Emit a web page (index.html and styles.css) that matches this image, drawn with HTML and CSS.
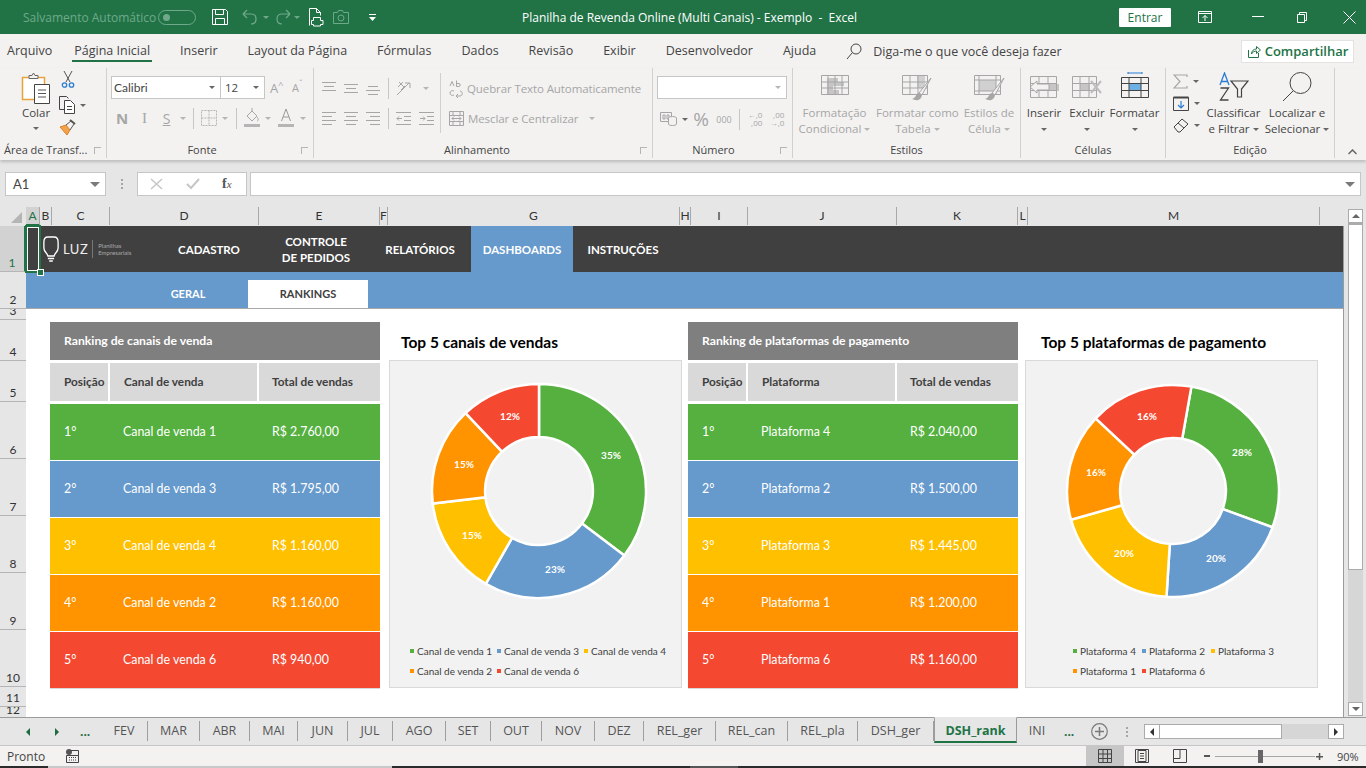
FILE: index.html
```html
<!DOCTYPE html>
<html lang="pt-BR">
<head>
<meta charset="utf-8">
<title>Planilha de Revenda Online (Multi Canais) - Exemplo - Excel</title>
<link rel="stylesheet" href="styles.css">
</head>
<body>

<!-- Title bar -->
<header class="titlebar">
    <div class="qat">
        <span class="autosave">Salvamento Automático</span>
        <span class="toggle"><i></i></span>
        <svg class="qat-save" width="18" height="18" viewBox="0 0 18 18" fill="none" stroke="#fff"><path d="M1.5 1.5h13l2 2v13h-15z"/><path d="M4.5 1.5v5h8v-5M4.5 16.5v-6h9v6"/></svg>
        <svg class="qat-undo" width="18" height="16" viewBox="0 0 18 16" fill="none" stroke="#6fa98a" stroke-width="1.2"><path d="M1 5l4-4M1 5l4 4M1 5h8c3 0 5 2 5 5s-2 5-5 5"/></svg>
        <i class="caret caret-qat"></i>
        <svg class="qat-redo" width="18" height="16" viewBox="0 0 18 16" fill="none" stroke="#6fa98a" stroke-width="1.2"><path d="M17 5l-4-4M17 5l-4 4M17 5H9c-3 0-5 2-5 5s2 5 5 5"/></svg>
        <i class="caret caret-qat"></i>
        <svg class="qat-print" width="16" height="20" viewBox="0 0 16 20" fill="none" stroke="#fff"><path d="M1.5 18.5V1.5h7l4 4v3M8.500 1.500v4h4"/><path d="M5.500 10.500h7v3h2.500v4h-2.500v1.500h-7v-1.500H3.500v-4h2z" fill="#217346"/></svg>
        <svg class="qat-camera" width="16" height="14" viewBox="0 0 16 14" fill="none" stroke="#6fa98a"><path d="M.5 2.500h4l1-2h4l1 2h5v11H.5z"/><circle cx="8" cy="8" r="3"/></svg>
        <svg class="qat-more" width="7" height="9" viewBox="0 0 7 9" fill="#fff"><path d="M0 1h7v1H0zM0 4h7L3.500 8z"/></svg>
    </div>
    <div class="doc-title">Planilha de Revenda Online (Multi Canais) - Exemplo &nbsp;-&nbsp; Excel</div>
    <div class="win-controls">
        <button class="signin">Entrar</button>
        <svg class="ctl-display" width="14" height="12" viewBox="0 0 14 12" fill="none" stroke="#fff"><path d="M.5.5h13v11H.5zM.5 2.500h13M7 10V4.500M4.500 7L7 4.500 9.500 7"/></svg>
        <svg class="ctl-min" width="12" height="2" viewBox="0 0 12 2" fill="#fff"><path d="M0 0h12v1H0z"/></svg>
        <svg class="ctl-max" width="10" height="11" viewBox="0 0 10 11" fill="none" stroke="#fff"><path d="M.5 2.500h7v8h-7zM2.500 2.500v-2h7v8h-2"/></svg>
        <svg class="ctl-close" width="13" height="13" viewBox="0 0 13 13" stroke="#fff"><path d="M.5.5l12 12M12.500.5l-12 12"/></svg>
    </div>
</header>

<!-- Tabs -->
<nav class="tabs">
    <span class="tab tab-file">Arquivo</span>
    <span class="tab tab-active">Página Inicial</span>
    <span class="tab">Inserir</span>
    <span class="tab">Layout da Página</span>
    <span class="tab">Fórmulas</span>
    <span class="tab">Dados</span>
    <span class="tab">Revisão</span>
    <span class="tab">Exibir</span>
    <span class="tab">Desenvolvedor</span>
    <span class="tab">Ajuda</span>
    <svg class="tell-icon" width="16" height="17" viewBox="0 0 16 17" fill="none" stroke="#444"><circle cx="10" cy="6" r="5"/><path d="M6.500 9.500L1 16"/></svg>
    <span class="tell">Diga-me o que você deseja fazer</span>
    <button class="share">
        <svg width="14" height="14" viewBox="0 0 14 14" fill="none" stroke="#217346"><path d="M1.500 6v7.500h10V9"/><path d="M4.500 10c0-3 2-5 5-5V2.500l4 3.500-4 3.500V7c-2 0-4 1-5 3z"/></svg>
        Compartilhar
    </button>
</nav>

<!-- Ribbon -->
<section class="ribbon">

    <div class="group g-clip">
        <div class="group-body clip-body">
            <div class="paste">
                <svg width="30" height="32" viewBox="0 0 30 32" fill="none">
                    <path d="M1.500 5.500h22v22h-22z" stroke="#e8a33d" stroke-width="1.500" fill="#fff"/>
                    <path d="M8 5.500V3.500h3L12.500 1 14 3.500h3v3H8z" stroke="#666" fill="#f3f2f1"/>
                    <path d="M13.500 12.500h15v19h-15z" stroke="#444" fill="#fff"/>
                    <path d="M17 18h8M17 21.500h8M17 25h8" stroke="#555"/>
                </svg>
                <span>Colar</span>
                <i class="caret"></i>
            </div>
            <div class="clip-tools">
                <svg width="14" height="17" viewBox="0 0 14 17" fill="none"><path d="M3 0l6 11M11 0L5 11" stroke="#555"/><circle cx="3.500" cy="14" r="2.200" stroke="#2b7cd3" stroke-width="1.300"/><circle cx="10.500" cy="14" r="2.200" stroke="#2b7cd3" stroke-width="1.300"/></svg>
                <div class="clip-copy">
                    <svg width="16" height="18" viewBox="0 0 16 18" fill="none" stroke="#444"><path d="M5.500 13.500h-5V.5h7l2 2"/><path d="M5.500 4.500h6l4 4v9h-10z" fill="#fff"/><path d="M8 10.500h5M8 13.500h5"/></svg>
                    <i class="caret"></i>
                </div>
                <svg width="18" height="17" viewBox="0 0 18 17" fill="none"><path d="M1 8l6-2 4 5-3 5z" fill="#f2a24a" stroke="#d9822b"/><path d="M7 6l5-4M11 11l4-6" stroke="#555"/><path d="M11 1l5 4" stroke="#555" stroke-width="2"/></svg>
            </div>
        </div>
        <div class="group-label label-clip">Área de Transf...<i class="launcher"></i></div>
    </div>

    <div class="group g-font">
        <div class="group-body font-body">
            <div class="font-row1">
                <div class="combo combo-font">Calibri<i class="caret"></i></div>
                <div class="combo combo-size">12<i class="caret"></i></div>
                <span class="grow-a">A<sup>^</sup></span>
                <span class="grow-a small-a">A<sup>ˇ</sup></span>
            </div>
            <div class="font-row2">
                <b class="fmt fmt-b">N</b>
                <i class="fmt fmt-i">I</i>
                <u class="fmt">S</u>
                <i class="caret caret-off"></i>
                <i class="tool-sep"></i>
                <svg width="16" height="16" viewBox="0 0 16 16" fill="none" stroke="#b5b5b5" stroke-dasharray="2 1"><path d="M.5.5h15v15H.5zM8 .5v15M.5 8h15"/></svg>
                <i class="caret caret-off"></i>
                <i class="tool-sep"></i>
                <svg width="16" height="20" viewBox="0 0 16 20" fill="none"><path d="M3 8l5-5 5 5-5 5z" stroke="#a6a6a6"/><path d="M8 3V0M13 9c2 2 1 4 0 4" stroke="#a6a6a6"/><path d="M0 16h16v3H0z" fill="#b5b5b5"/></svg>
                <i class="caret caret-off"></i>
                <svg width="16" height="20" viewBox="0 0 16 20" fill="none"><path d="M3.500 13L8 1l4.500 12M5 9h6" stroke="#999"/><path d="M0 16h16v3H0z" fill="#b5b5b5"/></svg>
                <i class="caret caret-off"></i>
            </div>
        </div>
        <div class="group-label label-font">Fonte<i class="launcher"></i></div>
    </div>

    <div class="group g-align">
        <div class="group-body align-body">
            <div class="align-left">
                <svg width="14" height="16" viewBox="0 0 14 16" stroke="#a6a6a6"><path d="M0 2.500h14M2 6.500h10M0 10.500h14"/></svg>
                <svg width="14" height="16" viewBox="0 0 14 16" stroke="#a6a6a6"><path d="M0 4.500h14M2 8.500h10M0 12.500h14"/></svg>
                <svg width="14" height="16" viewBox="0 0 14 16" stroke="#a6a6a6"><path d="M2 6.500h10M0 10.500h14M2 14.500h10"/></svg>
                <i class="tool-sep"></i>
                <svg width="16" height="16" viewBox="0 0 16 16" fill="none" stroke="#a6a6a6"><path d="M1 15L13 3M9 3h5v5"/><path d="M2 7l5-5M3 2l5 5M5 10l4-4"/></svg>
                <i class="caret caret-off"></i>

                <svg width="14" height="14" viewBox="0 0 14 14" stroke="#a6a6a6"><path d="M0 1.500h14M0 5.500h10M0 9.500h14M0 13.500h10"/></svg>
                <svg width="14" height="14" viewBox="0 0 14 14" stroke="#a6a6a6"><path d="M0 1.500h14M2 5.500h10M0 9.500h14M2 13.500h10"/></svg>
                <svg width="14" height="14" viewBox="0 0 14 14" stroke="#a6a6a6"><path d="M0 1.500h14M4 5.500h10M0 9.500h14M4 13.500h10"/></svg>
                <i class="tool-sep"></i>
                <svg width="15" height="14" viewBox="0 0 15 14" fill="none" stroke="#a6a6a6"><path d="M0 1.500h15M8 5.500h7M8 9.500h7M0 13.500h15M6 7.500H1M3 5.500l-2 2 2 2"/></svg>
                <svg width="15" height="14" viewBox="0 0 15 14" fill="none" stroke="#a6a6a6"><path d="M0 1.500h15M8 5.500h7M8 9.500h7M0 13.500h15M1 7.500h5M4 5.500l2 2-2 2"/></svg>
                <i class="blank"></i>
            </div>
            <div class="align-right">
                <div class="wrap-row">
                    <svg class="wrap-icon" width="14" height="18" viewBox="0 0 14 18" fill="none" stroke="#a6a6a6"><path d="M1 6l2-4.500L5 6M7.500.5v6h2.500c1.500 0 1.500-3 0-3H7.500"/><path d="M5 11c-2-1-4 0-4 2s2 3 4 2M7 16h4c3 0 3-5 0-5M9 14l-2 2 2 2"/></svg>
                    Quebrar Texto Automaticamente
                </div>
                <div class="wrap-row">
                    <svg class="merge-icon" width="15" height="15" viewBox="0 0 15 15" fill="none" stroke="#a6a6a6"><path d="M.5.5h14v14H.5zM.5 4.500h14M.5 10.500h14M4 .5v4M11 .5v4M4 10.500v4M11 10.500v4M3 7.500h9M5 5.500l-2 2 2 2M10 5.500l2 2-2 2"/></svg>
                    Mesclar e Centralizar
                    <i class="caret caret-off caret-merge"></i>
                </div>
            </div>
        </div>
        <div class="group-label label-align">Alinhamento<i class="launcher"></i></div>
    </div>

    <div class="group g-number">
        <div class="group-body number-body">
            <div class="combo combo-number"><i class="caret caret-off"></i></div>
            <div class="number-row">
                <svg width="17" height="14" viewBox="0 0 17 14" fill="none" stroke="#a6a6a6"><path d="M.5.5h11v9H.5z"/><path d="M3 3h2v4H3zM7 3h2v4H7z"/><ellipse cx="12.500" cy="6" rx="4" ry="1.500" fill="#f3f2f1"/><path d="M8.500 6v6c0 2 8 2 8 0V6" fill="#f3f2f1"/></svg>
                <i class="caret"></i>
                <span class="pct">%</span>
                <span class="thou">000</span>
                <i class="tool-sep"></i>
                <span class="dec"><span>←,0</span><span>,00</span></span>
                <span class="dec"><span>,00</span><span>→,0</span></span>
            </div>
        </div>
        <div class="group-label label-number">Número<i class="launcher"></i></div>
    </div>

    <div class="group g-styles">
        <div class="group-body big-body styles-body">
            <div class="big off">
                <svg width="28" height="20" viewBox="0 0 28 20" fill="none"><path d="M6 3h11v4h6v4H12v4h6v4H6z" fill="#c6c6c6"/><path d="M.5.500h27v19H.5zM.5 7h27M.5 13h27M7 .5v19M14 .5v19M21 .5v19" stroke="#a6a6a6"/></svg>
                <span>Formatação</span>
                <span>Condicional<i class="caret caret-off"></i></span>
            </div>
            <div class="big off">
                <svg width="30" height="28" viewBox="0 0 30 28" fill="none"><path d="M15 1h8v12h-8z" fill="#d0d0d0"/><path d="M.5.500h25v19H.5zM.5 7h25M.5 13h25M8 .5v19M16 .5v19" stroke="#a6a6a6"/><path d="M29 3L17 18l3 2 9-17z" fill="#f3f2f1" stroke="#a6a6a6"/><path d="M17 18c-3 0-3 5-7 6 4 2 9 2 10-4z" fill="#a6a6a6"/></svg>
                <span>Formatar como</span>
                <span>Tabela<i class="caret caret-off"></i></span>
            </div>
            <div class="big off">
                <svg width="31" height="28" viewBox="0 0 31 28" fill="none"><path d="M5 5h17v11H5z" fill="#d0d0d0"/><path d="M.5.500h26v19H.5zM5 .5v19M22 .5v19M.5 5h26M.5 16h26" stroke="#a6a6a6"/><path d="M30 3L18 18l3 2 9-17z" fill="#f3f2f1" stroke="#a6a6a6"/><path d="M18 18c-3 0-3 5-7 6 4 2 9 2 10-4z" fill="#a6a6a6"/></svg>
                <span>Estilos de</span>
                <span>Célula<i class="caret caret-off"></i></span>
            </div>
        </div>
        <div class="group-label">Estilos</div>
    </div>

    <div class="group g-cells">
        <div class="group-body big-body cells-body">
            <div class="big">
                <svg width="30" height="24" viewBox="0 0 30 24" fill="none"><path d="M12 9h18v7H12z" fill="#c6c6c6"/><path d="M1.500 1.500h26v21h-26zM1.500 8.500h26M1.500 15.500h26M10 1.500v21M19 1.500v21" stroke="#a6a6a6"/><path d="M1 12l7-6v3h12v6H8v3z" fill="#f3f2f1" stroke="#a6a6a6"/></svg>
                <span>Inserir</span>
                <i class="caret"></i>
            </div>
            <div class="big">
                <svg width="30" height="24" viewBox="0 0 30 24" fill="none"><path d="M8 9h10v7H8z" fill="#c6c6c6"/><path d="M.5 1.500h24v21H.5zM.5 8.500h24M.5 15.500h24M8 1.500v21M17 1.500v21" stroke="#a6a6a6"/><path d="M19 6l10 12M29 6L19 18" stroke="#bdbdbd" stroke-width="2"/></svg>
                <span>Excluir</span>
                <i class="caret"></i>
            </div>
            <div class="big big-format">
                <svg width="28" height="26" viewBox="0 0 28 26" fill="none"><path d="M7 1h14M7 0v2M21 0v2" stroke="#2b7cd3"/><path d="M8 11h12v7H8z" fill="#6cb0e6"/><path d="M.5 5.500h27v20H.5zM.5 11.500h27M.5 18.500h27M8 5.500v20M20 5.500v20" stroke="#444"/></svg>
                <span>Formatar</span>
                <i class="caret"></i>
            </div>
        </div>
        <div class="group-label">Células</div>
    </div>

    <div class="group g-edit">
        <div class="group-body big-body edit-body">
            <div class="edit-small">
                <div class="edit-tool">
                    <svg width="15" height="15" viewBox="0 0 15 15" fill="none" stroke="#a6a6a6" stroke-width="1.200"><path d="M14 3V1H1l6 6.500L1 14h13v-2"/></svg>
                    <i class="caret"></i>
                </div>
                <div class="edit-tool">
                    <svg width="16" height="15" viewBox="0 0 16 15" fill="none"><path d="M.5 1.500h15v13H.5z" stroke="#444"/><path d="M.5 1.500h15" stroke="#444" stroke-width="2"/><path d="M8 5v7M5 9l3 3 3-3" stroke="#2b7cd3" stroke-width="1.200"/></svg>
                    <i class="caret"></i>
                </div>
                <div class="edit-tool">
                    <svg width="16" height="15" viewBox="0 0 16 15" fill="none" stroke="#444"><path d="M1 9l8-8 6 5-8 8H5z"/><path d="M5 5l6 5"/></svg>
                    <i class="caret"></i>
                </div>
            </div>
            <div class="big big-tall">
                <svg width="31" height="29" viewBox="0 0 31 29" fill="none"><path d="M2 13L6.500 1 11 13M3.500 9.500h6" stroke="#2b7cd3" stroke-width="1.300"/><path d="M2.500 16h8l-8 12h8" stroke="#444" stroke-width="1.300"/><path d="M13 9h17l-6.500 8v8h-4v-8z" stroke="#444" stroke-width="1.200"/></svg>
                <span>Classificar</span>
                <span>e Filtrar<i class="caret"></i></span>
            </div>
            <div class="big big-tall">
                <svg width="30" height="29" viewBox="0 0 30 29" fill="none" stroke="#444"><circle cx="18.500" cy="11" r="10.500"/><path d="M11 19L1 29"/></svg>
                <span>Localizar e</span>
                <span>Selecionar<i class="caret"></i></span>
            </div>
        </div>
        <div class="group-label">Edição</div>
    </div>

    <svg class="collapse" width="9" height="6" viewBox="0 0 9 6" fill="none" stroke="#666" stroke-width="1.500"><path d="M.5 5l4-4 4 4"/></svg>
</section>

<!-- Formula bar -->
<div class="formula">
    <div class="namebox">A1<i class="caret caret-dark"></i></div>
    <div class="grip"></div>
    <div class="fx-box">
        <svg width="13" height="12" viewBox="0 0 13 12" stroke="#c6c6c6" stroke-width="1.500"><path d="M1 1l11 10M12 1L1 11"/></svg>
        <svg width="14" height="12" viewBox="0 0 14 12" fill="none" stroke="#c6c6c6" stroke-width="2"><path d="M1 6l4 4 8-9"/></svg>
        <span class="fx"><i>f</i><small>x</small></span>
    </div>
    <div class="fx-input"><i class="caret caret-dark"></i></div>
</div>

<!-- Sheet -->
<main class="workbook">
    <div class="grid-side">
        <div class="col-heads">
            <div class="corner"><i></i></div>
            <span class="col-on">A</span><span>B</span><span>C</span><span>D</span><span>E</span><span>F</span><span>G</span><span>H</span><span>I</span><span>J</span><span>K</span><span>L</span><span>M</span><span></span>
        </div>
        <div class="grid-main">
            <div class="row-heads">
                <span class="row-on r1">1</span>
                <span class="r2">2</span>
                <span class="r3">3</span>
                <span class="r4">4</span>
                <span class="r5">5</span>
                <span class="r6">6</span>
                <span class="r6">7</span>
                <span class="r6">8</span>
                <span class="r6">9</span>
                <span class="r6">10</span>
                <span class="r11">11</span>
                <span class="r12">12</span>
            </div>
            <div class="sheet">
                <div class="topnav">
                    <div class="logo">
                        <svg width="16" height="26" viewBox="0 0 18 26" fill="none" stroke="#fff" stroke-width="1.500" preserveAspectRatio="none"><path d="M5.500 1h7c3 0 4.500 2 4.500 5v6c0 4-4 5-4.500 8h-7C5 17 1 16 1 12V6c0-3 1.500-5 4.500-5z"/><path d="M5.500 22.500h7M7 25h4"/></svg>
                        <span class="logo-name">LUZ</span>
                        <span class="logo-sub">Planilhas<br>Empresariais</span>
                    </div>
                    <a class="nav-item">CADASTRO</a>
                    <a class="nav-item">CONTROLE<br>DE PEDIDOS</a>
                    <a class="nav-item nav-rel">RELATÓRIOS</a>
                    <a class="nav-on">DASHBOARDS</a>
                    <a class="nav-item">INSTRUÇÕES</a>
                </div>
                <div class="subnav">
                    <a class="sub-item">GERAL</a>
                    <a class="sub-item sub-on">RANKINGS</a>
                </div>
                <div class="board">

                    <div class="rank">
                        <div class="rank-title">Ranking de canais de venda</div>
                        <div class="rank-row rank-head"><span>Posição</span><span>Canal de venda</span><span>Total de vendas</span></div>
                        <div class="rank-row bg-green"><span>1°</span><span>Canal de venda 1</span><span>R$ 2.760,00</span></div>
                        <div class="rank-row bg-blue"><span>2°</span><span>Canal de venda 3</span><span>R$ 1.795,00</span></div>
                        <div class="rank-row bg-yellow"><span>3°</span><span>Canal de venda 4</span><span>R$ 1.160,00</span></div>
                        <div class="rank-row bg-orange"><span>4°</span><span>Canal de venda 2</span><span>R$ 1.160,00</span></div>
                        <div class="rank-row bg-red"><span>5°</span><span>Canal de venda 6</span><span>R$ 940,00</span></div>
                    </div>

                    <div class="chart chart-a">
                        <h2>Top 5 canais de vendas</h2>
                        <div class="panel">
                            <svg class="donut" width="291" height="280" viewBox="-149 -130 291 280">
                                <path class="s-green" d="M0-107A107 107 0 0 1 85.300 64.600L43 32.600A54 54 0 0 0 0-54Z"/>
                                <path class="s-blue" d="M85.300 64.600A107 107 0 0 1-53.200 92.800L-26.900 46.800A54 54 0 0 0 43 32.600Z"/>
                                <path class="s-yellow" d="M-53.200 92.800A107 107 0 0 1-106.300 12.500L-53.600 6.300A54 54 0 0 0-26.900 46.800Z"/>
                                <path class="s-orange" d="M-106.300 12.500A107 107 0 0 1-73.400-77.900L-37-39.300A54 54 0 0 0-53.600 6.300Z"/>
                                <path class="s-red" d="M-73.400-77.900A107 107 0 0 1 0-107L0-54A54 54 0 0 0-37-39.300Z"/>
                                <text x="72" y="-32">35%</text>
                                <text x="16" y="82">23%</text>
                                <text x="-67" y="48">15%</text>
                                <text x="-75" y="-23">15%</text>
                                <text x="-29" y="-71">12%</text>
                            </svg>
                            <ul class="legend legend-a">
                                <li><i class="bg-green"></i>Canal de venda 1</li>
                                <li><i class="bg-blue"></i>Canal de venda 3</li>
                                <li><i class="bg-yellow"></i>Canal de venda 4</li>
                                <li><i class="bg-orange"></i>Canal de venda 2</li>
                                <li><i class="bg-red"></i>Canal de venda 6</li>
                            </ul>
                        </div>
                    </div>

                    <div class="rank">
                        <div class="rank-title">Ranking de plataformas de pagamento</div>
                        <div class="rank-row rank-head"><span>Posição</span><span>Plataforma</span><span>Total de vendas</span></div>
                        <div class="rank-row bg-green"><span>1°</span><span>Plataforma 4</span><span>R$ 2.040,00</span></div>
                        <div class="rank-row bg-blue"><span>2°</span><span>Plataforma 2</span><span>R$ 1.500,00</span></div>
                        <div class="rank-row bg-yellow"><span>3°</span><span>Plataforma 3</span><span>R$ 1.445,00</span></div>
                        <div class="rank-row bg-orange"><span>4°</span><span>Plataforma 1</span><span>R$ 1.200,00</span></div>
                        <div class="rank-row bg-red"><span>5°</span><span>Plataforma 6</span><span>R$ 1.160,00</span></div>
                    </div>

                    <div class="chart chart-b">
                        <h2>Top 5 plataformas de pagamento</h2>
                        <div class="panel">
                            <svg class="donut" width="291" height="280" viewBox="-147 -130 291 280">
                                <path class="s-green" d="M18.400-104.400A106 106 0 0 1 99.600 36.300L49.800 18.100A53 53 0 0 0 9.200-52.200Z"/>
                                <path class="s-blue" d="M99.600 36.300A106 106 0 0 1-6.500 105.800L-3.200 52.900A53 53 0 0 0 49.800 18.100Z"/>
                                <path class="s-yellow" d="M-6.500 105.800A106 106 0 0 1-102 28.700L-51 14.300A53 53 0 0 0-3.200 52.900Z"/>
                                <path class="s-orange" d="M-102 28.700A106 106 0 0 1-77.300-72.600L-38.600-36.300A53 53 0 0 0-51 14.300Z"/>
                                <path class="s-red" d="M-77.300-72.600A106 106 0 0 1 18.400-104.400L9.200-52.200A53 53 0 0 0-38.600-36.300Z"/>
                                <text x="69" y="-35">28%</text>
                                <text x="43" y="71">20%</text>
                                <text x="-49" y="66">20%</text>
                                <text x="-77" y="-15">16%</text>
                                <text x="-26" y="-71">16%</text>
                            </svg>
                            <ul class="legend legend-b">
                                <li><i class="bg-green"></i>Plataforma 4</li>
                                <li><i class="bg-blue"></i>Plataforma 2</li>
                                <li><i class="bg-yellow"></i>Plataforma 3</li>
                                <li><i class="bg-orange"></i>Plataforma 1</li>
                                <li><i class="bg-red"></i>Plataforma 6</li>
                            </ul>
                        </div>
                    </div>

                </div>
            </div>
            <div class="cell-cursor"><i></i></div>
        </div>
    </div>
    <div class="vscroll">
        <button class="vs-btn"><i class="tri-up"></i></button>
        <div class="vs-thumb"></div>
        <div class="vs-track"></div>
        <button class="vs-btn"><i class="tri-down"></i></button>
    </div>
</main>

<!-- Sheet tabs -->
<div class="sheetbar">
    <div class="sheet-nav">
        <i class="nav-left"></i>
        <i class="nav-right"></i>
        <b>...</b>
    </div>
    <div class="sheet-tabs">
        <span>FEV</span><span>MAR</span><span>ABR</span><span>MAI</span><span>JUN</span><span>JUL</span><span>AGO</span><span>SET</span><span>OUT</span><span>NOV</span><span>DEZ</span><span>REL_ger</span><span>REL_can</span><span>REL_pla</span><span>DSH_ger</span><span class="sheet-on">DSH_rank</span><span class="sheet-last">INI</span>
    </div>
    <b class="more-tabs">...</b>
    <svg class="add-sheet" width="17" height="17" viewBox="0 0 17 17" fill="none" stroke="#7a7a7a"><circle cx="8.500" cy="8.500" r="7.800" stroke-width="1.200"/><path d="M4 8.500h9M8.500 4v9" stroke-width="1.500"/></svg>
    <div class="bar-grip"></div>
    <div class="hscroll">
        <button class="hs-btn"><i class="tri-left"></i></button>
        <div class="hs-thumb"></div>
        <div class="hs-track"></div>
        <button class="hs-btn"><i class="tri-right"></i></button>
    </div>
</div>

<!-- Status bar -->
<footer class="status">
    <span class="ready">Pronto</span>
    <svg class="macro" width="13" height="14" viewBox="0 0 13 14" fill="none"><circle cx="3" cy="3" r="3" fill="#555"/><path d="M.5 6.500h12v7H.5zM5 1.500h7.500v5" stroke="#444"/><path d="M3 8.500h7M3 11h7" stroke="#444" stroke-dasharray="1 1"/></svg>
    <div class="status-right">
        <div class="view view-on">
            <svg width="14" height="14" viewBox="0 0 14 14" fill="none" stroke="#444"><path d="M.5.500h13v13H.5zM5 .5v13M9.500 .5v13M.5 5h13M.5 9.500h13"/></svg>
        </div>
        <div class="view view-page">
            <svg width="14" height="14" viewBox="0 0 14 14" fill="none" stroke="#444"><path d="M.5.500h13v13H.5z"/><path d="M3 1.500v11h8v-11zM5 4.500h4M5 7h4M5 9.500h4"/></svg>
        </div>
        <div class="view view-break">
            <svg width="14" height="14" viewBox="0 0 14 14" fill="none" stroke="#444"><path d="M.5.500h13v13H.5zM.5 9.500h6.500v-9"/></svg>
        </div>
        <i class="zoom-minus"></i>
        <div class="zoom-track"><i></i></div>
        <svg class="zoom-plus" width="7" height="7" viewBox="0 0 7 7" fill="#555"><path d="M0 3h7v1.500H0zM2.800 0h1.500v7H2.800z"/></svg>
        <span class="zoom-val">90%</span>
    </div>
</footer>
<div class="taskbar"><i class="task-a"></i><i class="task-b"></i></div>

</body>
</html>
```

FILE: styles.css
```css
* {
    box-sizing: border-box;
}
html, body {
    margin: 0;
    height: 100%;
}
body {
    width: 1366px;
    height: 768px;
    overflow: hidden;
    display: flex;
    flex-direction: column;
    background: #e6e6e6;
    color: #444;
    font-family: "Open Sans", "Liberation Sans", sans-serif;
    font-size: 12px;
}
button {
    font-family: inherit;
    border: 0;
    padding: 0;
}
i {
    font-style: normal;
}

/* carets */
.caret {
    display: inline-block;
    width: 0;
    height: 0;
    border-left: 3px solid transparent;
    border-right: 3px solid transparent;
    border-top: 3px solid #666;
}
.caret-off {
    border-top-color: #b5b5b5;
}
.caret-dark {
    border-left-width: 5px;
    border-right-width: 5px;
    border-top-width: 5px;
    border-top-color: #7a7a7a;
}
.caret-qat {
    border-top-color: #6fa98a;
}

/* title bar */
.titlebar {
    height: 34px;
    flex: none;
    background: #217346;
    display: grid;
    grid-template-columns: 522px 320px 1fr;
    align-items: center;
    color: #fff;
}
.qat {
    display: flex;
    align-items: center;
    padding-left: 23px;
}
.autosave {
    color: #6fa98a;
    width: 135px;
    font-size: 12px;
    white-space: nowrap;
}
.toggle {
    width: 38px;
    height: 15px;
    border: 1px solid #6fa98a;
    border-radius: 8px;
    display: flex;
    align-items: center;
    padding-left: 4px;
}
.toggle i {
    width: 7px;
    height: 7px;
    border-radius: 50%;
    background: #6fa98a;
}
.qat-save { margin-left: 15px; }
.qat-undo { margin-left: 13px; }
.caret-qat { margin-left: 3px; }
.qat-redo { margin-left: 4px; }
.qat-print { margin-left: 8px; }
.qat-camera { margin-left: 9px; }
.qat-more { margin-left: 20px; }
.doc-title {
    font-size: 12px;
    white-space: nowrap;
    text-align: center;
}
.win-controls {
    display: flex;
    align-items: center;
    padding-left: 277px;
}
.signin {
    width: 52px;
    height: 19px;
    background: #fff;
    color: #217346;
    font-size: 12px;
    border-radius: 1px;
}
.ctl-display { margin-left: 27px; }
.ctl-min { margin-left: 40px; }
.ctl-max { margin-left: 33px; }
.ctl-close { margin-left: 36px; }

/* tabs */
.tabs {
    height: 34px;
    flex: none;
    background: #f3f2f1;
    display: flex;
    align-items: center;
    padding-left: 7px;
    gap: 30px;
    font-size: 12.500px;
}
.tab {
    position: relative;
    white-space: nowrap;
    line-height: 34px;
}
.tab-file {
    margin-right: -8px;
}
.tab-active::after {
    content: "";
    position: absolute;
    left: -2px;
    right: -2px;
    bottom: 6px;
    height: 2px;
    background: #217346;
}
.tell-icon {
    margin-right: -19px;
}
.tell {
    white-space: nowrap;
}
.share {
    margin-left: auto;
    margin-right: 12px;
    width: 113px;
    height: 23px;
    background: #fff;
    color: #217346;
    font-size: 13px;
    font-weight: 600;
    border: 1px solid #e3e2e1;
    display: flex;
    align-items: center;
    justify-content: center;
    gap: 4px;
    white-space: nowrap;
}

/* ribbon */
.ribbon {
    height: 92px;
    flex: none;
    background: #f3f2f1;
    display: flex;
    align-items: flex-start;
    box-shadow: 0 2px 3px rgba(0,0,0,.18);
    position: relative;
    z-index: 2;
    font-size: 11.500px;
}
.group {
    height: 90px;
    display: flex;
    flex-direction: column;
    border-right: 1px solid #d2d0ce;
    flex: none;
}
.group-body {
    height: 76px;
}
.group-label {
    height: 16px;
    line-height: 16px;
    text-align: center;
    position: relative;
    white-space: nowrap;
    font-size: 11px;
}
.launcher {
    position: absolute;
    right: 5px;
    top: 5px;
    width: 7px;
    height: 7px;
    border-left: 1px solid #b5b5b5;
    border-top: 1px solid #b5b5b5;
}
.g-clip { width: 107px; }
.g-font { width: 207px; }
.g-align { width: 339px; }
.g-number { width: 140px; }
.g-styles { width: 228px; }
.g-cells { width: 145px; }
.g-edit { width: 169px; }
.label-clip {
    text-align: left;
    padding-left: 4px;
}
.label-font { padding-right: 16px; }
.label-align { padding-right: 12px; }
.label-number { padding-right: 18px; }

/* clipboard */
.clip-body {
    display: flex;
    padding-left: 21px;
}
.paste {
    width: 30px;
    display: flex;
    flex-direction: column;
    align-items: center;
    padding-top: 4px;
    line-height: 16px;
}
.paste span {
    margin-top: 1px;
}
.paste .caret {
    margin-top: 6px;
}
.clip-tools {
    display: flex;
    flex-direction: column;
    padding: 3px 0 0 8px;
    gap: 5px;
    align-items: flex-start;
}
.clip-tools > svg:first-child {
    margin-left: 2px;
}
.clip-copy {
    display: flex;
    align-items: center;
    gap: 5px;
    margin-top: 3px;
}

/* font */
.font-body {
    padding: 8px 0 0 4px;
}
.font-row1 {
    display: flex;
    align-items: center;
}
.combo {
    height: 23px;
    background: #fff;
    border: 1px solid #c6c6c6;
    line-height: 21px;
    padding-left: 2px;
    display: flex;
    align-items: center;
    justify-content: space-between;
    padding-right: 5px;
}
.combo-font {
    width: 110px;
    font-family: "Lato", sans-serif;
    font-size: 12px;
}
.combo-size {
    width: 44px;
    margin-left: 0;
    border-left: 0;
    padding-left: 4px;
}
.grow-a {
    color: #a6a6a6;
    font-size: 13px;
    width: 22px;
    margin-left: 5px;
}
.small-a {
    font-size: 11px;
    width: 18px;
    margin-left: 0;
}
.grow-a sup {
    font-size: 9px;
    line-height: 0;
}
.font-row2 {
    display: grid;
    grid-template-columns: 22px 23px 21px 11px 10px 21px 12px 10px 22px 10px 25px 9px;
    align-items: center;
    justify-items: center;
    margin-top: 7px;
    height: 24px;
}
.fmt {
    color: #a6a6a6;
    font-size: 14px;
}
.fmt-b {
    font-size: 15px;
}
.fmt-i {
    font-family: "Liberation Serif", serif;
    font-size: 15px;
}
.tool-sep {
    width: 1px;
    height: 21px;
    background: #c8c6c4;
    display: block;
}

/* alignment */
.align-body {
    display: flex;
    padding-top: 5px;
}
.align-left {
    width: 127px;
    height: 60px;
    padding-left: 4px;
    display: grid;
    grid-template-columns: 22px 22px 22px 8px 23px 22px;
    grid-template-rows: 1fr 1fr;
    align-items: center;
    justify-items: center;
    border-right: 1px solid #d2d0ce;
}
.align-right {
    padding-left: 8px;
    display: flex;
    flex-direction: column;
    justify-content: space-around;
    height: 60px;
    color: #a6a6a6;
    white-space: nowrap;
}
.wrap-row {
    display: flex;
    align-items: center;
    gap: 4px;
    letter-spacing: -.1px;
}
.wrap-icon {
    margin-right: 0;
}
.caret-merge {
    margin-left: 7px;
}

/* number */
.number-body {
    padding: 8px 0 0 4px;
}
.combo-number {
    width: 130px;
    justify-content: flex-end;
}
.number-row {
    display: grid;
    grid-template-columns: 23px 9px 24px 22px 8px 24px 20px;
    align-items: center;
    justify-items: center;
    margin-top: 7px;
    height: 24px;
    color: #a6a6a6;
}
.pct {
    font-size: 19px;
}
.thou {
    font-size: 9px;
}
.dec {
    display: flex;
    flex-direction: column;
    font-size: 8px;
    line-height: 8px;
    text-align: right;
}

/* big buttons */
.big-body {
    display: grid;
    padding-top: 5px;
}
.styles-body {
    grid-template-columns: 83px 82px 62px;
}
.cells-body {
    grid-template-columns: 46px 40px 55px;
}
.edit-body {
    grid-template-columns: 39px 57px 70px;
}
.big {
    display: grid;
    grid-template-rows: 32px 16px 16px;
    justify-items: center;
    align-items: center;
    white-space: nowrap;
    line-height: 16px;
}
.big svg {
    align-self: start;
    margin-top: 2px;
}
.big-format svg {
    margin-top: -1px;
}
.big-tall svg {
    margin-top: -1px;
}
.big span .caret {
    margin-left: 3px;
    vertical-align: middle;
}
.off {
    color: #a6a6a6;
}
.edit-small {
    display: flex;
    flex-direction: column;
    gap: 7px;
    padding: 1px 0 0 7px;
}
.edit-tool {
    display: flex;
    align-items: center;
    gap: 5px;
}

.collapse {
    margin: 81px 0 0 13px;
}

/* formula bar */
.formula {
    height: 47px;
    flex: none;
    display: flex;
    align-items: center;
    padding: 1px 5px 0;
    background: #e6e6e6;
}
.namebox {
    width: 101px;
    height: 24px;
    background: #fff;
    border: 1px solid #c6c6c6;
    display: flex;
    align-items: center;
    justify-content: space-between;
    padding: 0 5px 0 7px;
    font-family: "Lato", sans-serif;
    font-size: 13px;
}
.grip {
    width: 2px;
    height: 10px;
    margin: 0 14px 0 15px;
    border-left: 2px dotted #a6a6a6;
}
.fx-box {
    width: 110px;
    height: 24px;
    background: #fff;
    border: 1px solid #c6c6c6;
    display: flex;
    align-items: center;
    padding: 0 12px;
    gap: 23px;
}
.fx {
    font-family: "Liberation Serif", serif;
    font-style: italic;
    font-size: 14px;
    margin-left: -1px;
    color: #555;
    white-space: nowrap;
}
.fx i {
    font-weight: bold;
}
.fx small {
    font-size: 11px;
}
.fx-input {
    flex: 1;
    height: 24px;
    margin-left: 3px;
    background: #fff;
    border: 1px solid #c6c6c6;
    display: flex;
    align-items: center;
    justify-content: flex-end;
    padding-right: 5px;
}

/* workbook */
.workbook {
    height: 510px;
    flex: none;
    display: flex;
    background: #e6e6e6;
}
.grid-side {
    width: 1345px;
    display: flex;
    flex-direction: column;
}
.col-heads {
    height: 19px;
    flex: none;
    display: grid;
    grid-template-columns: 26px 14px 12px 58px 149px 121px 8px 292px 11px 57px 149px 121px 10px 292px 1fr;
    font-family: "Lato", sans-serif;
    font-size: 12px;
    line-height: 18px;
    text-align: center;
    color: #333;
}
.col-heads span {
    border-right: 1px solid #a8a8a8;
    height: 18px;
}
.col-heads span:last-child {
    border-right: 0;
}
.corner {
    position: relative;
}
.corner i {
    position: absolute;
    right: 4px;
    bottom: 3px;
    border-style: solid;
    border-width: 0 0 11px 11px;
    border-color: transparent transparent #b5b5b5 transparent;
}
.col-heads .col-on {
    background: #d2d2d2;
    color: #217346;
    height: 19px;
    border-bottom: 2px solid #217346;
}
.grid-main {
    flex: 1;
    display: flex;
    position: relative;
    min-height: 0;
}
.row-heads {
    width: 26px;
    flex: none;
    display: flex;
    flex-direction: column;
    font-family: "Lato", sans-serif;
    font-size: 12px;
    color: #333;
    overflow: hidden;
}
.row-heads span {
    display: flex;
    align-items: flex-end;
    justify-content: center;
    border-bottom: 1px solid #b5b5b5;
    line-height: 16px;
    flex: none;
    overflow: hidden;
}
.r1 { height: 46px; }
.r2 { height: 37px; }
.r3 { height: 11px; }
.r4 { height: 41px; }
.r5 { height: 41px; }
.r6 { height: 57px; }
.r11 { height: 20px; }
.r12 { height: 12px; }
.row-heads .row-on {
    background: #d2d2d2;
    color: #217346;
    border-right: 2px solid #217346;
}
.sheet {
    width: 1318px;
    background: #fff;
    border-right: 1px solid #9b9b9b;
    overflow: hidden;
    display: flex;
    flex-direction: column;
}
.cell-cursor {
    position: absolute;
    left: 25px;
    top: -1px;
    width: 16px;
    height: 48px;
    border: 2px solid #217346;
}
.cell-cursor::before {
    content: "";
    position: absolute;
    inset: 0;
    border: 1px solid #fff;
}
.cell-cursor i {
    position: absolute;
    right: -5px;
    bottom: -5px;
    width: 7px;
    height: 7px;
    background: #217346;
    border: 1px solid #fff;
}

/* dashboard header */
.topnav {
    height: 46px;
    flex: none;
    background: #404040;
    color: #fff;
    display: grid;
    grid-template-columns: 136px 94px 120px 95px 102px 100px;
    align-items: center;
    font-family: "Lato", sans-serif;
    font-weight: 700;
    font-size: 11.500px;
    line-height: 16px;
    text-align: center;
}
.logo {
    display: flex;
    align-items: center;
    padding-left: 17px;
    font-weight: 400;
    text-align: left;
}
.logo-name {
    font-size: 13px;
    letter-spacing: .5px;
    margin-left: 4px;
    padding-right: 4px;
    border-right: 1px solid #777;
    line-height: 18px;
    color: #eee;
}
.logo-sub {
    font-size: 6px;
    line-height: 7px;
    margin-left: 5px;
    color: #aaa;
}
.nav-item {
    display: block;
    padding-top: 2px;
}
.nav-rel {
    padding-right: 7px;
}
.nav-on {
    display: block;
    background: #6699cc;
    line-height: 48px;
    height: 46px;
}
.subnav {
    height: 37px;
    flex: none;
    background: #6699cc;
    border-bottom: 1px solid #a8a8a8;
    display: flex;
    align-items: flex-end;
    padding-left: 102px;
    font-family: "Lato", sans-serif;
    font-weight: 700;
    font-size: 11px;
    color: #fff;
}
.sub-item {
    height: 28px;
    line-height: 28px;
    width: 120px;
    text-align: center;
}
.sub-on {
    background: #fff;
    color: #404040;
    margin-left: 0;
}

/* dashboard body */
.board {
    display: flex;
    padding: 13px 0 0 24px;
    font-family: "Lato", sans-serif;
}
.rank {
    width: 330px;
    flex: none;
}
.rank-title {
    height: 38px;
    margin-bottom: 3px;
    background: #7f7f7f;
    color: #fff;
    font-weight: 700;
    font-size: 12.200px;
    line-height: 38px;
    padding-left: 14px;
    white-space: nowrap;
}
.rank-row {
    display: grid;
    grid-template-columns: 59px 148px 121px;
    column-gap: 1px;
    height: 56px;
    margin-bottom: 1px;
    color: #fff;
    font-size: 12.400px;
    line-height: 56px;
}
.rank-row span {
    padding-left: 13px;
}
.rank-row span:first-child {
    padding-left: 14px;
}
.rank-row.bg-red {
    box-shadow: 0 1px 0 #d9d9d9;
}
.rank-head {
    height: 38px;
    line-height: 38px;
    margin-bottom: 3px;
    color: #404040;
    font-weight: 700;
    font-size: 11.800px;
    column-gap: 2px;
    grid-template-columns: 58px 147px 121px;
}
.rank-head span {
    background: #d9d9d9;
    padding-left: 14px;
}
.rank-head span:last-child {
    padding-left: 13px;
}
.bg-green { background: #55b03f; }
.bg-blue { background: #6699cc; }
.bg-yellow { background: #ffc000; }
.bg-orange { background: #ff9300; }
.bg-red { background: #f44831; }

.chart {
    flex: none;
    display: flex;
    flex-direction: column;
}
.chart-a {
    width: 293px;
    margin: 0 6px 0 9px;
}
.chart-b {
    width: 293px;
    margin-left: 7px;
}
.chart h2 {
    margin: 0;
    height: 38px;
    line-height: 40px;
    font-size: 15.500px;
    font-weight: 700;
    color: #000;
    white-space: nowrap;
}
.chart-a h2 {
    padding-left: 12px;
}
.chart-b h2 {
    padding-left: 16px;
}
.panel {
    height: 328px;
    background: #f2f2f2;
    border: 1px solid #d9d9d9;
}
.donut {
    display: block;
}
.donut path {
    stroke: #fff;
    stroke-width: 2.500;
}
.donut text {
    fill: #fff;
    font-size: 10px;
    font-weight: 700;
    text-anchor: middle;
}
.s-green { fill: #55b03f; }
.s-blue { fill: #6699cc; }
.s-yellow { fill: #ffc000; }
.s-orange { fill: #ff9300; }
.s-red { fill: #f44831; }
.legend {
    list-style: none;
    margin: 0;
    display: grid;
    grid-auto-rows: 20px;
    font-size: 10px;
    color: #404040;
    white-space: nowrap;
}
.legend li {
    display: flex;
    align-items: center;
    gap: 3px;
}
.legend i {
    width: 4px;
    height: 4px;
}
.legend-a {
    padding: 0 0 0 20px;
    grid-template-columns: repeat(3, 87px);
}
.legend-b {
    padding: 0 0 0 47px;
    grid-template-columns: repeat(3, 69px);
}

/* vertical scrollbar */
.vscroll {
    width: 21px;
    flex: none;
    padding: 2px 3px 1px 3px;
    display: flex;
    flex-direction: column;
    background: #e6e6e6;
}
.vs-btn {
    height: 14px;
    flex: none;
    background: #fff;
    border: 1px solid #ababab;
    display: flex;
    align-items: center;
    justify-content: center;
}
.tri-up, .tri-down, .tri-left, .tri-right {
    display: block;
    width: 0;
    height: 0;
    border-style: solid;
}
.tri-up {
    border-width: 0 4px 4px;
    border-color: transparent transparent #666;
}
.tri-down {
    border-width: 4px 4px 0;
    border-color: #666 transparent transparent;
}
.tri-left {
    border-width: 4px 4px 4px 0;
    border-color: transparent #333 transparent transparent;
}
.tri-right {
    border-width: 4px 0 4px 4px;
    border-color: transparent transparent transparent #333;
}
.vs-thumb {
    height: 347px;
    flex: none;
    background: #fff;
    border: 1px solid #ababab;
    border-top-width: 2px;
}
.vs-track {
    flex: 1;
    background: #d6d6d6;
}

/* sheet tabs */
.sheetbar {
    height: 29px;
    flex: none;
    background: #e6e6e6;
    border-top: 1px solid #9b9b9b;
    border-bottom: 1px solid #c6c6c6;
    display: flex;
    align-items: flex-start;
    font-size: 12.500px;
    color: #555;
}
.sheet-nav {
    width: 101px;
    height: 27px;
    display: flex;
    align-items: center;
    padding-left: 26px;
    color: #1e6b3f;
}
.nav-left {
    border-style: solid;
    border-width: 4px 4px 4px 0;
    border-color: transparent #1e6b3f transparent transparent;
}
.nav-right {
    margin-left: 25px;
    border-style: solid;
    border-width: 4px 0 4px 4px;
    border-color: transparent transparent transparent #1e6b3f;
}
.sheet-nav b {
    margin-left: 21px;
    font-size: 12px;
    line-height: 1;
}
.sheet-tabs {
    display: grid;
    grid-template-columns: 47px 52px 50px 48px 50px 45px 53px 45px 51px 53px 49px 72px 72px 70px 76px 83px 40px;
    height: 27px;
}
.sheet-tabs span {
    height: 20px;
    margin-top: 3px;
    line-height: 20px;
    text-align: center;
    border-right: 1px solid #9e9e9e;
    white-space: nowrap;
}
.sheet-tabs .sheet-on {
    height: 26px;
    margin-top: -1px;
    line-height: 25px;
    background: #e6e6e6;
    border: 1px solid #9b9b9b;
    border-top-color: #e6e6e6;
    border-bottom: 2px solid #217346;
    color: #217346;
    font-weight: 700;
}
.sheet-tabs .sheet-last {
    border-right: 0;
}
.more-tabs {
    color: #1e6b3f;
    font-size: 12px;
    line-height: 27px;
    margin-left: 7px;
}
.add-sheet {
    margin: 5px 0 0 17px;
}
.bar-grip {
    width: 2px;
    height: 10px;
    margin: 9px 0 0 18px;
    border-left: 2px dotted #a6a6a6;
}
.hscroll {
    display: flex;
    width: 200px;
    height: 15px;
    margin: 6px 0 0 16px;
}
.hs-btn {
    width: 16px;
    height: 15px;
    background: #fff;
    border: 1px solid #ababab;
    display: flex;
    align-items: center;
    justify-content: center;
    flex: none;
}
.hs-thumb {
    width: 122px;
    background: #fff;
    border: 1px solid #ababab;
    border-left: 0;
}
.hs-track {
    flex: 1;
    background: #d6d6d6;
}

/* status bar */
.status {
    height: 20px;
    flex: none;
    background: #f3f2f1;
    display: flex;
    align-items: center;
    padding-left: 7px;
}
.macro {
    margin-left: 21px;
}
.status-right {
    margin-left: auto;
    display: flex;
    align-items: center;
    height: 20px;
}
.view {
    width: 38px;
    height: 20px;
    display: flex;
    align-items: center;
    justify-content: center;
}
.view-page { width: 36px; }
.view-break { width: 40px; }
.view-on {
    background: #c6c6c6;
}
.zoom-minus {
    width: 6px;
    height: 2px;
    background: #555;
    margin-left: 4px;
}
.zoom-track {
    width: 100px;
    height: 1px;
    margin-left: 5px;
    background: #a6a6a6;
    position: relative;
}
.zoom-track i {
    position: absolute;
    left: 43px;
    top: -6px;
    width: 5px;
    height: 13px;
    background: #666;
}
.zoom-plus {
    margin-left: 1px;
}
.zoom-val {
    margin-left: 14px;
    width: 29px;
    font-size: 11px;
}
.taskbar {
    flex: 1;
    background: #2b2b2b;
    position: relative;
}
.task-a {
    position: absolute;
    left: 48px;
    width: 344px;
    top: 0;
    bottom: 0;
    background: #c8c8c8;
}
.task-b {
    position: absolute;
    left: 690px;
    width: 48px;
    top: 0;
    bottom: 0;
    background: #555;
}
```
